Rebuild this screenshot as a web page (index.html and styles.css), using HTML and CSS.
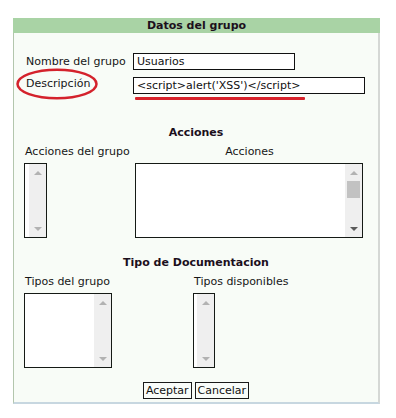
FILE: index.html
```html
<!DOCTYPE html>
<html lang="es">
<head>
  <meta charset="UTF-8">
  <title>Datos del grupo</title>
  <link rel="stylesheet" href="styles.css">
</head>
<body>

  <div class="panel">
    <div class="panel-title">Datos del grupo</div>

    <div class="panel-body">

      <div class="fields">
        <label class="field-label">Nombre del grupo</label>
        <input class="field-input short" type="text" value="Usuarios">

        <label class="field-label marked">Descripción
          <svg class="circle-mark" width="82" height="32" viewBox="0 0 82 32">
            <ellipse cx="41" cy="16" rx="39.5" ry="14.3" fill="none" stroke="#d4222c" stroke-width="2.5"/>
          </svg>
        </label>
        <div class="field-wrap">
          <input class="field-input long" type="text" value="&lt;script&gt;alert('XSS')&lt;/script&gt;">
          <span class="underline-mark"></span>
        </div>
      </div>

      <div class="section-title first">Acciones</div>
      <div class="picker acciones">
        <div class="picker-label">Acciones del grupo</div>
        <div class="picker-label centered">Acciones</div>

        <div class="listbox w23">
          <div class="list-items"></div>
          <div class="scrollbar">
            <div class="sb-btn"><span class="arrow-up"></span></div>
            <div class="sb-track"></div>
            <div class="sb-btn"><span class="arrow-down"></span></div>
          </div>
        </div>

        <div class="listbox w228">
          <div class="list-items"></div>
          <div class="scrollbar">
            <div class="sb-btn"><span class="arrow-up"></span></div>
            <div class="sb-thumb"></div>
            <div class="sb-track"></div>
            <div class="sb-btn"><span class="arrow-down active"></span></div>
          </div>
        </div>
      </div>

      <div class="section-title">Tipo de Documentacion</div>
      <div class="picker tipos">
        <div class="picker-label">Tipos del grupo</div>
        <div class="picker-label">Tipos disponibles</div>

        <div class="listbox w88">
          <div class="list-items"></div>
          <div class="scrollbar">
            <div class="sb-btn"><span class="arrow-up"></span></div>
            <div class="sb-track"></div>
            <div class="sb-btn"><span class="arrow-down"></span></div>
          </div>
        </div>

        <div class="listbox w22">
          <div class="list-items"></div>
          <div class="scrollbar">
            <div class="sb-btn"><span class="arrow-up"></span></div>
            <div class="sb-track"></div>
            <div class="sb-btn"><span class="arrow-down"></span></div>
          </div>
        </div>
      </div>

      <div class="buttons">
        <button class="btn">Aceptar</button>
        <button class="btn">Cancelar</button>
      </div>

    </div>
  </div>

</body>
</html>
```

FILE: styles.css
```css
body {
  margin: 0;
  background-color: white;
  color: #161616;
  font-family: "DejaVu Sans", Verdana, sans-serif;
  font-size: 11px;
}

.panel {
  width: 367px;
  margin: 18px 0 0 13px;
}

.panel-title {
  height: 15px;
  line-height: 15px;
  background-color: #a9d3a5;
  color: #1c0f1c;
  font-weight: bold;
  text-align: center;
}

.panel-body {
  background-color: #f8fcf7;
  border-left: 1px solid #b3c6ad;
  border-right: 2px solid #d5d8d5;
  border-bottom: 2px solid #c7d7e0;
  padding: 20px 10px 3px;
}

/* campos de texto */

.fields {
  display: grid;
  grid-template-columns: 109px 1fr;
  row-gap: 7px;
  align-items: center;
}

.field-label {
  position: relative;
  padding-left: 2px;
  line-height: 17px;
}

.field-label.marked {
  align-self: start;
  line-height: 14px;
}

.field-input {
  box-sizing: border-box;
  height: 17px;
  margin: 0;
  padding: 0 3px;
  border: 1px solid #111;
  background-color: white;
  color: #111;
  font: inherit;
  outline: none;
}

.field-input.short {
  width: 162px;
  justify-self: start;
}

.field-input.long {
  width: 232px;
  display: block;
}

.field-wrap {
  position: relative;
}

/* marcas rojas */

.circle-mark {
  position: absolute;
  left: -8px;
  top: -9px;
  overflow: visible;
}

.underline-mark {
  position: absolute;
  left: 2px;
  top: 20px;
  width: 170px;
  height: 3px;
  border-radius: 1px;
  background-color: #d8232c;
}

/* secciones */

.section-title {
  margin-top: 18px;
  line-height: 14px;
  font-weight: bold;
  text-align: center;
  color: #1c0f1c;
}

.section-title.first {
  margin-top: 32px;
}

.picker {
  display: grid;
  row-gap: 4px;
  margin-top: 5px;
}

.acciones {
  grid-template-columns: 111px 228px;
}

.tipos {
  grid-template-columns: 169px auto;
}

.picker-label {
  line-height: 14px;
  padding-left: 1px;
}

.picker-label.centered {
  text-align: center;
}

/* listas */

.listbox {
  box-sizing: border-box;
  display: flex;
  height: 75px;
  border: 1px solid #151a15;
  background-color: white;
}

.w23 { width: 23px; }
.w228 { width: 228px; }
.w88 { width: 88px; }
.w22 { width: 22px; }

.list-items {
  flex: 1;
}

.scrollbar {
  width: 17px;
  display: flex;
  flex-direction: column;
  background-color: #efefef;
}

.sb-btn {
  height: 17px;
  display: flex;
  align-items: center;
  justify-content: center;
}

.sb-track {
  flex: 1;
}

.sb-thumb {
  height: 17px;
  margin: 0 2px;
  background-color: #c2c2c2;
}

.arrow-up,
.arrow-down {
  width: 0;
  height: 0;
  border-left: 4px solid transparent;
  border-right: 4px solid transparent;
}

.arrow-up {
  border-bottom: 4px solid #b2b2b2;
}

.arrow-down {
  border-top: 4px solid #b2b2b2;
}

.arrow-down.active {
  border-top-color: #5a5a5a;
}

/* botones */

.buttons {
  display: flex;
  justify-content: center;
  gap: 3px;
  margin-top: 14px;
}

.btn {
  box-sizing: border-box;
  height: 17px;
  margin: 0;
  padding: 0 2px;
  border: 1px solid #1a1a1a;
  background-color: #f9fcf9;
  color: #111;
  font: inherit;
  line-height: 15px;
}
```
